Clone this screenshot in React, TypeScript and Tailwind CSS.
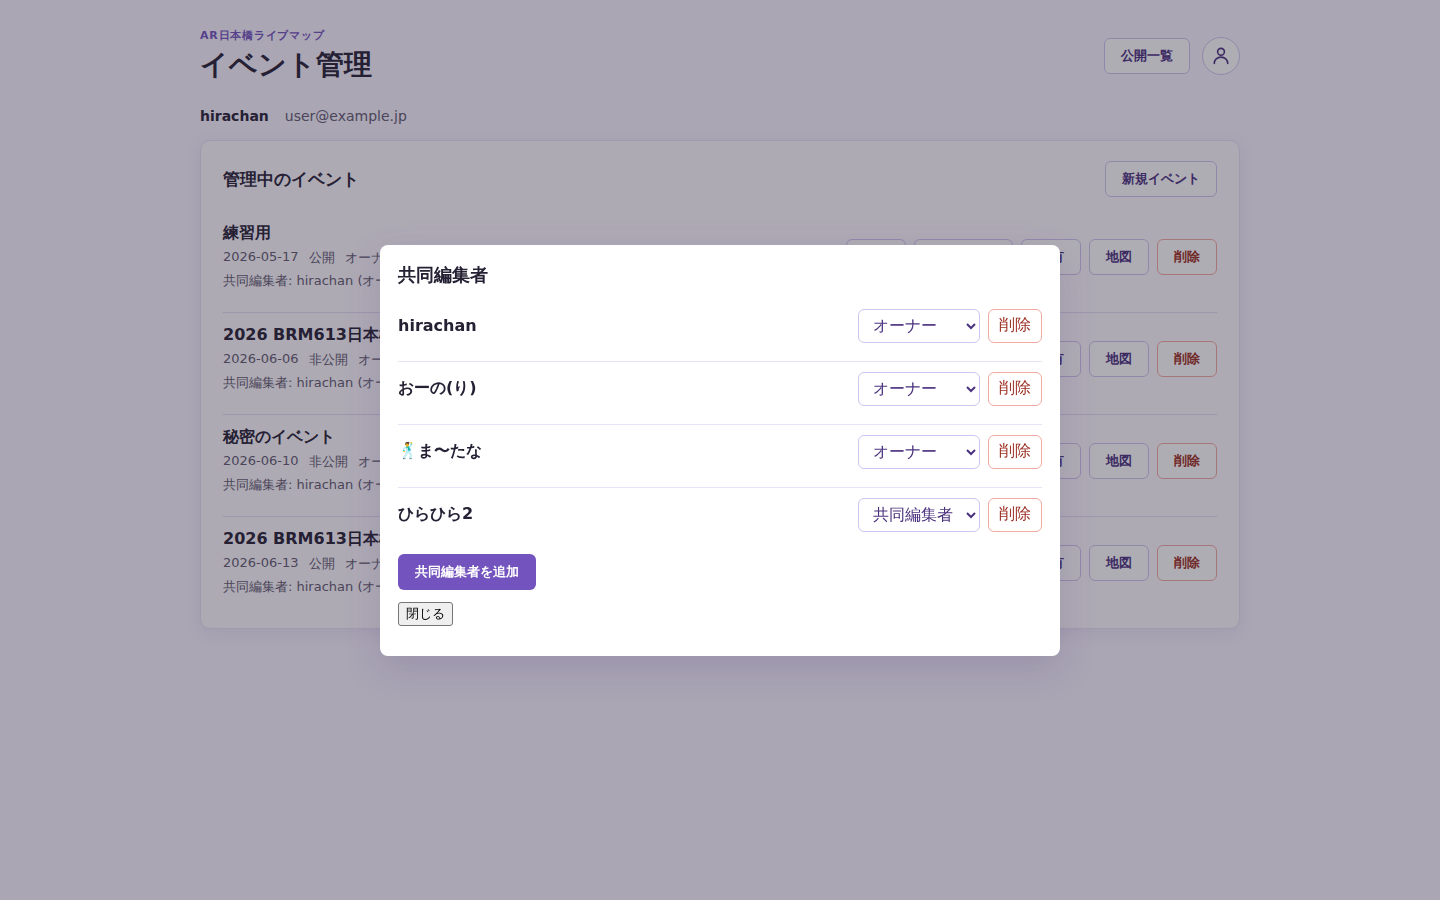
import type { ReactNode } from "react";

const EVENTS = [
  { title: "練習用", date: "2026-05-17", visibility: "公開" },
  { title: "2026 BRM613日本橋", date: "2026-06-06", visibility: "非公開" },
  { title: "秘密のイベント", date: "2026-06-10", visibility: "非公開" },
  { title: "2026 BRM613日本橋", date: "2026-06-13", visibility: "公開" },
];

const EDITORS = [
  { name: "hirachan", role: "owner" },
  { name: "おーの(り)", role: "owner" },
  { name: "🕺ま〜たな", role: "owner" },
  { name: "ひらひら2", role: "editor" },
];

export default function App() {
  return (
    <div className="min-h-screen bg-[#f7f4ff] font-['DejaVu_Sans',sans-serif] text-[#252033]">
      <main className="mx-auto w-[1040px] pt-7">
        <header className="flex h-14 items-center justify-between">
          <div>
            <p className="text-[11px] leading-4 font-bold tracking-[0.07em] text-[#7353bd]">AR日本橋ライブマップ</p>
            <h1 className="h-10 text-[28px] leading-[42px] font-bold">イベント管理</h1>
          </div>
          <div className="flex items-center gap-3">
            <ActionButton>公開一覧</ActionButton>
            <button className="flex size-[38px] items-center justify-center rounded-full border border-[#cfc5ef] bg-white text-[#4b327f]">
              <UserIcon />
            </button>
          </div>
        </header>

        <div className="mt-[22px] flex h-5 items-center gap-4 text-sm">
          <strong>hirachan</strong>
          <span className="text-[#625a70]">user@example.jp</span>
        </div>

        <section className="mt-3.5 h-[489px] rounded-[10px] border border-[#e7e1f7] bg-[#fdfbff] px-[22px] pt-5 shadow-[0_4px_18px_rgba(75,50,127,0.08)]">
          <div className="flex items-center justify-between">
            <h2 className="pt-0.5 text-[17px] font-bold">管理中のイベント</h2>
            <ActionButton>新規イベント</ActionButton>
          </div>
          <ul className="mt-3.5">
            {EVENTS.map((event) => (
              <EventRow key={event.date} {...event} />
            ))}
          </ul>
        </section>
      </main>

      <div className="fixed inset-0 flex items-center justify-center bg-[#252033]/37">
        <EditorsDialog />
      </div>
    </div>
  );
}

function EventRow({ title, date, visibility }: { title: string; date: string; visibility: string }) {
  return (
    <li className="flex h-[102px] items-center justify-between border-b border-[#e2dcf5] pt-2.5 pb-[19px] last:h-[101px] last:border-b-0">
      <div className="text-[13px] leading-6 text-[#625a70]">
        <h3 className="text-base leading-6 font-bold text-[#252033]">{title}</h3>
        <div className="flex h-6 gap-2.5 leading-[26px]">
          <span className="leading-6">{date}</span>
          <span>{visibility}</span>
          <span>オーナー</span>
        </div>
        <p>共同編集者: hirachan (オーナー)</p>
      </div>
      <div className="flex gap-2">
        <ActionButton>編集</ActionButton>
        <ActionButton>共同編集者</ActionButton>
        <ActionButton>共有</ActionButton>
        <ActionButton>地図</ActionButton>
        <ActionButton danger>削除</ActionButton>
      </div>
    </li>
  );
}

function EditorsDialog() {
  return (
    <div role="dialog" className="h-[411px] w-[680px] rounded-lg bg-white px-[18px] pt-[18px] shadow-[0_12px_36px_rgba(75,50,127,0.18)]">
      <h2 className="text-lg leading-6 font-bold">共同編集者</h2>
      <ul className="mt-3">
        {EDITORS.map((editor) => (
          <li key={editor.name} className="flex h-[63px] items-center border-b border-[#e8e4f8] pt-2.5 pb-[18px] last:border-b-0 last:pb-[19px]">
            <strong className="flex-1 leading-[normal]">{editor.name}</strong>
            <select
              defaultValue={editor.role}
              className="mr-2 h-[34px] w-[122px] rounded-md border border-[#cfc5ef] bg-white px-2.5 text-[#4b327f]"
            >
              <option value="owner">オーナー</option>
              <option value="editor">共同編集者</option>
            </select>
            <button className="h-[34px] w-[54px] rounded-md border border-[#f0aaa2] bg-white pb-0.5 text-[#9c2f22]">削除</button>
          </li>
        ))}
      </ul>
      <button className="mt-[3px] block h-9 w-[138px] rounded-md bg-[#7353bd] text-[13px] font-bold text-white">
        共同編集者を追加
      </button>
      <button className="mt-3 block h-6 w-[55px] rounded-[3px] border border-[#767676] bg-[#efefef] text-[13.333px] leading-5 text-black">
        閉じる
      </button>
    </div>
  );
}

function ActionButton({ children, danger = false }: { children: ReactNode; danger?: boolean }) {
  return (
    <button
      className={`h-9 rounded-md border bg-white px-4 text-[13px] font-bold ${
        danger ? "border-[#f0aaa2] text-[#9c2f22]" : "border-[#cfc5ef] text-[#4b327f]"
      }`}
    >
      {children}
    </button>
  );
}

function UserIcon() {
  return (
    <svg viewBox="0 0 20 20" className="size-5" fill="none" stroke="currentColor" strokeWidth="1.6" strokeLinecap="round">
      <circle cx="10" cy="5.8" r="3.4" />
      <path d="M3.3 17.4c0-3.6 2.9-6.3 6.7-6.3s6.7 2.7 6.7 6.3" />
    </svg>
  );
}
